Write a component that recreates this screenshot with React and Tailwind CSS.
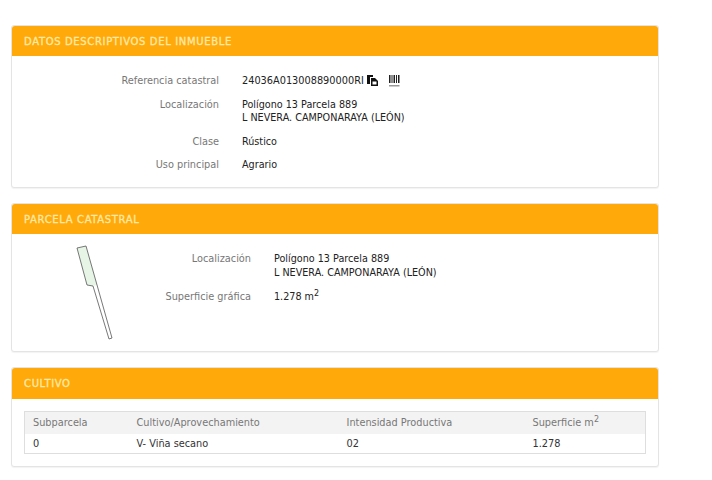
const FONT = "font-['DejaVu_Sans',Verdana,sans-serif]";

function Panel({ title, className, headerClassName = 'h-[30px]', children }) {
  return (
    <section className={`rounded-[3px] border border-[#e4e4e4] bg-white shadow-[0_1px_1px_rgba(0,0,0,0.05)] ${className}`}>
      <h2 className={`flex items-center rounded-t-[3px] bg-[#ffa90a] px-3 text-[10px] font-normal tracking-[0.65px] text-[#ffe9a8] [-webkit-text-stroke:0.3px_#ffe9a8] ${headerClassName}`}>
        {title}
      </h2>
      {children}
    </section>
  );
}

function Field({ label, labelWidth, className = '', children }) {
  return (
    <div className={`flex gap-[23px] ${className}`}>
      <div className="shrink-0 text-right text-[#777]" style={{ width: labelWidth }}>{label}</div>
      <div className="text-[9.65px] text-[#222]">{children}</div>
    </div>
  );
}

function CopyIcon() {
  return (
    <svg width="11" height="11" viewBox="0 0 11 11" className="mt-px block">
      <path d="M0 0h6v2H3v7H0z" fill="#111" />
      <path d="M4 3h4l3 3v5H4z" fill="#111" />
      <path d="M5.500 6.500h4v3h-4z" fill="#fff" />
    </svg>
  );
}

function BarcodeIcon() {
  return (
    <svg width="12" height="12" viewBox="0 0 12 12" className="mt-px block">
      <path d="M1 0h1.500v8H1zM3.500 0h1v8h-1zM5.500 0h1.500v8H5.500zM8 0h1v8H8zM10 0h1.500v8H10z" fill="#222" />
      <path d="M1 10h10.500v1.500H1z" fill="#999" />
    </svg>
  );
}

function ParcelShape() {
  return (
    <svg width="40" height="98" viewBox="0 0 40 98" className="absolute left-[64px] top-[11px]">
      <path d="M1 3 10 1 21 40 17 41 11 40Z" fill="#e6f5e6" />
      <path d="M1 3 10 1 36 93 33 94 17 41 11 40Z" fill="none" stroke="#555" strokeWidth="0.8" />
    </svg>
  );
}

export default function App() {
  return (
    <div className={`${FONT} h-[480px] w-[712px] overflow-hidden bg-white pl-[11px] pt-[25px] text-[9.75px] leading-[13px]`}>
      <div className="flex w-[648px] flex-col">
        <Panel title="DATOS DESCRIPTIVOS DEL INMUEBLE" className="h-[163px]">
          <div className="flex flex-col pt-[18px]">
            <Field label="Referencia catastral" labelWidth={207} className="h-[24px]">
              <div className="flex items-start">
                <span className="text-[9.75px]">24036A013008890000RI</span>
                <span className="ml-[3px]"><CopyIcon /></span>
                <span className="ml-[10px]"><BarcodeIcon /></span>
              </div>
            </Field>
            <Field label="Localización" labelWidth={207} className="h-[37px]">
              Polígono 13 Parcela 889<br />L NEVERA. CAMPONARAYA (LEÓN)
            </Field>
            <Field label="Clase" labelWidth={207} className="h-[23px]">Rústico</Field>
            <Field label="Uso principal" labelWidth={207}>Agrario</Field>
          </div>
        </Panel>

        <Panel title="PARCELA CATASTRAL" className="mt-[15px] h-[149px]">
          <div className="relative flex flex-col pt-[18px]">
            <ParcelShape />
            <Field label="Localización" labelWidth={239} className="h-[38px] leading-[14px]">
              Polígono 13 Parcela 889<br />L NEVERA. CAMPONARAYA (LEÓN)
            </Field>
            <Field label="Superficie gráfica" labelWidth={239}>
              1.278 m<sup className="text-[8px]">2</sup>
            </Field>
          </div>
        </Panel>

        <Panel title="CULTIVO" className="mt-[15px] h-[100px]" headerClassName="h-[31px]">
          <div className="px-3 pt-3">
            <table className="w-[622px] table-fixed border border-[#dedede]">
              <thead>
                <tr className="h-[22px] bg-[#f3f3f3] text-left text-[#777]">
                  <th className="w-[112px] pl-2 font-normal">Subparcela</th>
                  <th className="w-[210px] font-normal">Cultivo/Aprovechamiento</th>
                  <th className="w-[186px] font-normal">Intensidad Productiva</th>
                  <th className="font-normal">Superficie m<sup className="text-[8px]">2</sup></th>
                </tr>
              </thead>
              <tbody>
                <tr className="h-[20px] text-[#333]">
                  <td className="pl-2">0</td>
                  <td>V- Viña secano</td>
                  <td>02</td>
                  <td>1.278</td>
                </tr>
              </tbody>
            </table>
          </div>
        </Panel>
      </div>
    </div>
  );
}
